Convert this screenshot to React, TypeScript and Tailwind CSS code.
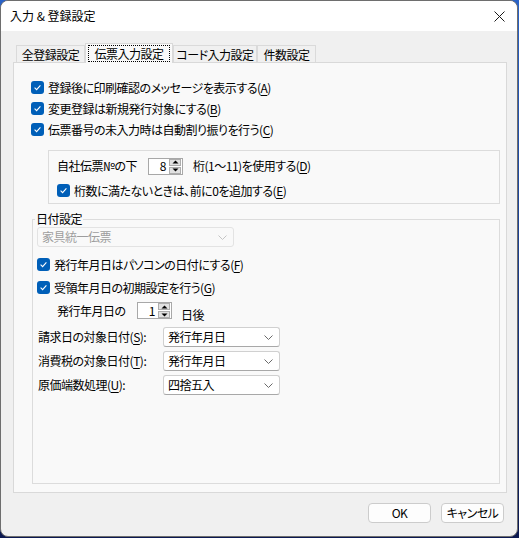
import React from 'react';

function Mn({ children }: { children: React.ReactNode }) {
  return <span className="underline decoration-1 underline-offset-[2px]">{children}</span>;
}

function Check() {
  return (
    <span className="flex h-[13px] w-[13px] shrink-0 items-center justify-center rounded-[3px] bg-[#005fb8]">
      <svg width="9" height="9" viewBox="0 0 9 9">
        <path d="M1.6 4.7 L3.6 6.6 L7.4 2.3" fill="none" stroke="#ffffff" strokeWidth="1.1" />
      </svg>
    </span>
  );
}

function CheckRow({ children, className = '' }: { children: React.ReactNode; className?: string }) {
  return (
    <div className={`flex h-[21px] items-center gap-[4px] ${className}`}>
      <Check />
      <span>{children}</span>
    </div>
  );
}

function Spin({ value }: { value: string }) {
  return (
    <div className="flex h-[17px] w-[35px] shrink-0 items-center border border-[#a8a8a8] bg-white">
      <span className="flex-1 pr-[3px] text-right leading-none">{value}</span>
      <div className="mr-[1px] flex h-[15px] w-[12px] flex-col gap-[1px]">
        <div className="flex flex-1 items-center justify-center border border-[#adadad] bg-[#e1e1e1]">
          <svg width="7" height="4" viewBox="0 0 7 4">
            <path d="M0.5 3.5 L3.5 0.5 L6.5 3.5 Z" fill="#000000" />
          </svg>
        </div>
        <div className="flex flex-1 items-center justify-center border border-[#adadad] bg-[#e1e1e1]">
          <svg width="7" height="4" viewBox="0 0 7 4">
            <path d="M0.5 0.5 L3.5 3.5 L6.5 0.5 Z" fill="#000000" />
          </svg>
        </div>
      </div>
    </div>
  );
}

function Combo({ value, width, disabled = false }: { value: string; width: string; disabled?: boolean }) {
  return (
    <div
      className={`flex h-[20px] shrink-0 items-center justify-between rounded-[3px] border pl-[4px] pr-[6px] ${width} ${
        disabled ? 'border-[#e3e3e3] bg-[#f9f9f9] text-[#9d9d9d]' : 'border-[#d0d0d0] border-b-[#a8a8a8] bg-white'
      }`}
    >
      <span>{value}</span>
      <svg width="9" height="5" viewBox="0 0 9 5">
        <path d="M0.5 0.5 L4.5 4.5 L8.5 0.5" fill="none" stroke={disabled ? '#c4c4c4' : '#6a6a6a'} strokeWidth="1" />
      </svg>
    </div>
  );
}

const tabs = [
  { label: '全登録設定', w: 'w-[69px]' },
  { label: '伝票入力設定', w: 'w-[88px]', active: true },
  { label: 'コード入力設定', w: 'w-[84px]' },
  { label: '件数設定', w: 'w-[59px]' },
];

export default function App() {
  return (
    <div className="h-[538px] w-[519px] bg-gradient-to-b from-[#2a63c8] to-[#0b1850] font-['Noto_Sans_CJK_JP','Noto_Sans',sans-serif] text-[12px] leading-[16px] tracking-[-0.5px] text-black [font-feature-settings:'palt']">
      <div className="flex h-[537px] w-[518px] flex-col overflow-hidden rounded-[8px] border border-[#6e6e6e] bg-[#f0f0f0]">
        <div className="flex h-[30px] shrink-0 items-center justify-between bg-white pl-[9px] pr-[12px]">
          <span className="tracking-normal [font-feature-settings:normal]">入力 &amp; 登録設定</span>
          <svg width="11" height="11" viewBox="0 0 11 11">
            <path d="M0.5 0.5 L10.5 10.5 M10.5 0.5 L0.5 10.5" stroke="#1a1a1a" strokeWidth="1" />
          </svg>
        </div>

        <div className="flex flex-1 flex-col pl-[12px] pr-[10px] pt-[12px]">
          <div className="flex h-[19px] items-end pl-[3px]">
            {tabs.map((t) =>
              t.active ? (
                <div
                  key={t.label}
                  className={`relative z-10 -mb-px flex h-[20px] items-center justify-center border border-b-0 border-[#d9d9d9] bg-[#f9f9f9] ${t.w}`}
                >
                  <span className="flex h-[17px] w-[82px] items-center justify-center border border-dotted border-black">
                    {t.label}
                  </span>
                </div>
              ) : (
                <div
                  key={t.label}
                  className={`flex h-[17px] items-center justify-center border border-b-0 border-[#dadada] bg-[#f0f0f0] pt-[1px] ${t.w}`}
                >
                  {t.label}
                </div>
              )
            )}
          </div>

          <div className="flex h-[431px] flex-col border border-[#d9d9d9] bg-[#f9f9f9] pl-[17px] pr-[6px] pt-[14px]">
            <CheckRow>
              登録後に印刷確認のメッセージを表示する(<Mn>A</Mn>)
            </CheckRow>
            <CheckRow>
              変更登録は新規発行対象にする(<Mn>B</Mn>)
            </CheckRow>
            <CheckRow>
              伝票番号の未入力時は自動割り振りを行う(<Mn>C</Mn>)
            </CheckRow>

            <div className="ml-[17px] mt-[10px] flex h-[54px] flex-col border border-[#dcdcdc] pl-[8px] pt-[6px]">
              <div className="flex h-[18px] items-center">
                <span className="w-[91px] shrink-0">自社伝票№の下</span>
                <Spin value="8" />
                <span className="ml-[10px]">
                  桁(1～11)を使用する(<Mn>D</Mn>)
                </span>
              </div>
              <CheckRow className="mt-[5px]">
                桁数に満たないときは、前に0を追加する(<Mn>E</Mn>)
              </CheckRow>
            </div>

            <fieldset className="ml-[1px] mt-[7px] h-[273px] border border-[#dcdcdc]">
              <legend className="ml-[2px] px-[1px] leading-[16px]">日付設定</legend>
              <div className="flex flex-col pl-[4px]">
                <Combo value="家具統一伝票" width="w-[197px]" disabled />
                <div className="mt-[6px]">
                  <div className="flex h-[23px] items-center gap-[4px]">
                    <Check />
                    <span>
                      発行年月日はパソコンの日付にする(<Mn>F</Mn>)
                    </span>
                  </div>
                  <div className="flex h-[23px] items-center gap-[4px]">
                    <Check />
                    <span>
                      受領年月日の初期設定を行う(<Mn>G</Mn>)
                    </span>
                  </div>
                  <div className="flex h-[23px] items-center pl-[20px]">
                    <span className="w-[80px] shrink-0">発行年月日の</span>
                    <Spin value="1" />
                    <span className="ml-[9px] pt-[8px]">日後</span>
                  </div>
                </div>
                <div className="mt-[3px] flex flex-col">
                  <div className="flex h-[24px] items-center">
                    <span className="w-[126px] shrink-0 pl-[1px]">
                      請求日の対象日付(<Mn>S</Mn>):
                    </span>
                    <Combo value="発行年月日" width="w-[117px]" />
                  </div>
                  <div className="flex h-[24px] items-center">
                    <span className="w-[126px] shrink-0 pl-[1px]">
                      消費税の対象日付(<Mn>T</Mn>):
                    </span>
                    <Combo value="発行年月日" width="w-[117px]" />
                  </div>
                  <div className="flex h-[24px] items-center">
                    <span className="w-[126px] shrink-0 pl-[1px]">
                      原価端数処理(<Mn>U</Mn>):
                    </span>
                    <Combo value="四捨五入" width="w-[117px]" />
                  </div>
                </div>
              </div>
            </fieldset>
          </div>

          <div className="mr-[3px] mt-[10px] flex justify-end gap-[10px]">
            <button className="h-[20px] w-[63px] rounded-[4px] border border-[#cccccc] bg-[#fdfdfd] leading-none">
              OK
            </button>
            <button className="h-[20px] w-[63px] rounded-[4px] border border-[#cccccc] bg-[#fdfdfd] leading-none">
              キャンセル
            </button>
          </div>
        </div>
      </div>
    </div>
  );
}
